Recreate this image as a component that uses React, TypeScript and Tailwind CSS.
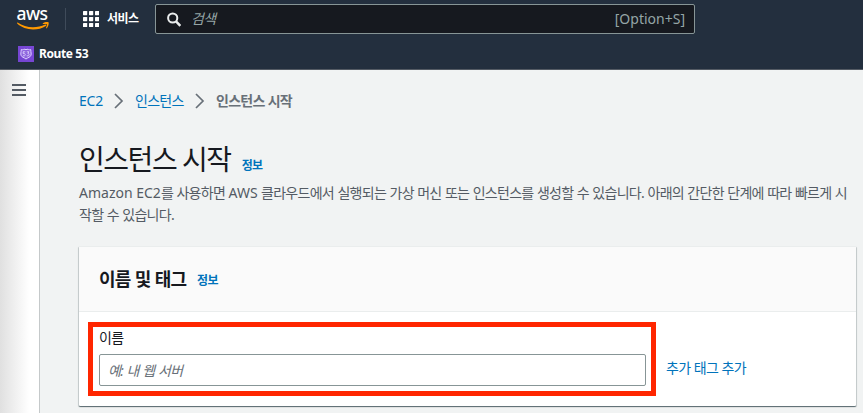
import React from "react";

const GRID = [0, 1, 2];

function AwsLogo() {
  return (
    <div className="flex h-[24px] w-[32px] flex-col items-center">
      <span className="mr-[2px] h-[13px] font-['Noto_Sans',sans-serif] text-[17.5px] leading-[9px] font-medium tracking-[-0.6px] text-white">
        aws
      </span>
      <svg className="block" width="32" height="9" viewBox="0 0 32 9" fill="none">
        <path
          d="M0.6 0.6C8.5 6.2 19.5 6.7 28.2 2.6C29 2.3 29.9 3.2 28.9 3.9C20.8 9.2 7.6 8.7 0.2 1.6C-0.2 1.1 0.1 0.4 0.6 0.6Z"
          fill="#f90"
        />
        <path
          d="M25.8 1.2C27.8 -0.2 31.2 -0.2 31.6 0.5C32 1.2 31.4 4.8 29.6 6.3C29.2 6.5 28.8 6.3 29 5.8C29.5 4.8 30.2 2.6 29.8 2.2C29.4 1.8 27.4 1.9 26.2 2C25.6 2 25.5 1.4 25.8 1.2Z"
          fill="#f90"
        />
      </svg>
    </div>
  );
}

function ServicesIcon() {
  return (
    <svg className="block" width="16" height="16" viewBox="0 0 16 16" fill="#fff">
      {GRID.map((r) =>
        GRID.map((c) => (
          <rect key={`${r}${c}`} x={c * 6} y={r * 6} width="4.2" height="4.2" rx="0.6" />
        ))
      )}
    </svg>
  );
}

function Route53Icon() {
  return (
    <svg className="block" width="16" height="16" viewBox="0 0 16 16" fill="none">
      <defs>
        <linearGradient id="violet" x1="0" y1="16" x2="16" y2="0">
          <stop stopColor="#4d27a8" />
          <stop offset="1" stopColor="#a166ff" />
        </linearGradient>
      </defs>
      <rect width="16" height="16" fill="url(#violet)" />
      <path
        d="M3.3 3.5C4.5 4 5.3 3.7 6 3.1C7.2 3.7 8.8 3.7 10 3.1C10.8 3.8 11.6 4 12.7 3.5C12.4 5 13.5 6.2 13.2 8C13 9.8 12.5 10.5 11 11.3C9.6 12 8.8 12.4 8 13C7.2 12.4 6.4 12 5 11.3C3.5 10.5 3 9.8 2.8 8C2.5 6.2 3.6 5 3.3 3.5Z"
        fill="#b79cf0"
        fillOpacity="0.35"
        stroke="#dccfff"
        strokeWidth="1"
      />
      <path
        d="M5 5.8H7.3M5.2 5.8V7.6H6.4C7.6 7.6 7.6 9.8 6.2 9.8H5M8.8 5.8H11L9.8 7.4C11.5 7.3 11.5 9.8 9.9 9.8H8.7"
        stroke="#e5dcff"
        strokeWidth="0.8"
      />
    </svg>
  );
}

function Chevron() {
  return (
    <svg className="block" width="10" height="16" viewBox="0 0 10 16" fill="none">
      <path d="M1 1L8 8L1 15" stroke="#687078" strokeWidth="1.7" />
    </svg>
  );
}

function Header() {
  return (
    <header className="h-[70px] border-b border-[#545b64] bg-[#232f3e]">
      <div className="flex h-[38px] items-start">
        <div className="mt-[9px] ml-[17px]">
          <AwsLogo />
        </div>
        <div className="mt-[8px] ml-4 h-[22px] w-px bg-[#3f4b5a]" />
        <div className="mt-[11px] ml-[17px]">
          <ServicesIcon />
        </div>
        <span className="mt-[9px] ml-2 w-[48px] text-[12px] leading-[20px] font-bold tracking-[-0.05em] text-white">
          서비스
        </span>
        <div className="mt-1 flex h-[30px] w-[540px] items-center rounded-[2px] border border-[#879596] bg-[#16191f] pr-[9px] pl-[11px]">
          <svg className="block" width="14" height="15" viewBox="0 0 14 15" fill="none" stroke="#eaeded" strokeWidth="2">
            <circle cx="5.7" cy="6" r="4.6" />
            <path d="M9 9.3L13.3 13.8" strokeWidth="2.4" />
          </svg>
          <input
            placeholder="검색"
            className="ml-[10px] min-w-0 flex-1 bg-transparent text-[14px] leading-[20px] tracking-[-0.05em] italic placeholder:text-[#95a5a6] focus:outline-none"
          />
          <span className="text-[14px] leading-[20px] text-[#95a5a6]">[Option+S]</span>
        </div>
      </div>
      <div className="mt-2 ml-[18px] flex h-[16px] items-center">
        <Route53Icon />
        <span className="ml-[5px] text-[12px] leading-[16px] font-bold tracking-[-0.4px] text-white">Route 53</span>
      </div>
    </header>
  );
}

function Ko({ children }: { children: React.ReactNode }) {
  return <span className="tracking-[-0.05em] [word-spacing:0.42px]">{children}</span>;
}

function NameCard() {
  return (
    <section className="mt-[20px] h-[160px] w-[777px] rounded-[1px] border-t border-[#eaeded] bg-white shadow-[0_1px_1px_0_rgba(0,28,36,0.5),1px_1px_1px_0_rgba(0,28,36,0.15),-1px_1px_1px_0_rgba(0,28,36,0.15)]">
      <div className="flex h-[65px] items-center border-b border-[#eaeded] bg-[#fafafa] px-5 pb-px">
        <h2 className="text-[18px] leading-[24px] font-bold tracking-[-0.05em] [word-spacing:0.6px] text-[#16191f]">이름 및 태그</h2>
        <a className="mt-1 ml-[11px] text-[12px] leading-[16px] font-bold tracking-[-0.05em] text-[#0073bb]">정보</a>
      </div>
      <div className="flex items-start pt-[10px] pl-[9px]">
        <div className="h-[74px] w-[568px] border-[5px] border-[#ff2600] px-[6px]">
          <label className="block text-[14px] leading-[22px] tracking-[-0.05em] text-[#16191f]">이름</label>
          <input
            placeholder="예: 내 웹 서버"
            className="mt-[5px] block h-[32px] w-[547px] rounded-[2px] border border-[#879596] bg-white px-[8px] text-[14px] tracking-[-0.05em] [word-spacing:0.6px] italic placeholder:text-[#687078] focus:outline-none"
          />
        </div>
        <a className="mt-[35px] ml-[10px] text-[14px] leading-[22px] tracking-[-0.05em] [word-spacing:0.5px] text-[#0073bb]">추가 태그 추가</a>
      </div>
    </section>
  );
}

export default function App() {
  return (
    <div className="h-[413px] w-[863px] overflow-hidden bg-[#f1f3f3] font-['Noto_Sans','Noto_Sans_CJK_KR',sans-serif] whitespace-nowrap">
      <Header />
      <div className="flex h-[343px]">
        <aside className="w-[40px] border-r border-[#c5c9ca] bg-linear-to-r from-[#e0e0e0] to-white to-75% pt-[14px] pl-3">
          <svg className="block" width="14" height="12" viewBox="0 0 14 12" fill="#545b64">
            <rect width="14" height="2" />
            <rect y="5" width="14" height="2" />
            <rect y="10" width="14" height="2" />
          </svg>
        </aside>
        <main className="pt-5 pl-[39px]">
          <nav className="flex h-[22px] items-center text-[14px] leading-[22px] text-[#0073bb]">
            <a className="w-[35px] tracking-[-0.2px]">EC2</a>
            <Chevron />
            <a className="ml-[11px] w-[60px] tracking-[-0.05em]">인스턴스</a>
            <Chevron />
            <span className="ml-[11px] font-bold tracking-[-0.05em] text-[#687078]">인스턴스 시작</span>
          </nav>
          <div className="mt-[29px] flex h-[36px] items-baseline">
            <h1 className="text-[28px] leading-[36px] tracking-[-0.052em] text-[#16191f]">인스턴스 시작</h1>
            <a className="ml-[11px] text-[12px] leading-[16px] font-bold tracking-[-0.05em] text-[#0073bb]">정보</a>
          </div>
          <p className="mt-[5px] h-[44px] text-[14px] leading-[22px] text-[#545b64]">
            Amazon EC2<Ko>를 사용하면 </Ko>AWS
            <Ko> 클라우드에서 실행되는 가상 머신 또는 인스턴스를 생성할 수 있습니다. 아래의 간단한 단계에 따라 빠르게 시</Ko>
            <br />
            <Ko>작할 수 있습니다.</Ko>
          </p>
          <NameCard />
        </main>
      </div>
    </div>
  );
}
